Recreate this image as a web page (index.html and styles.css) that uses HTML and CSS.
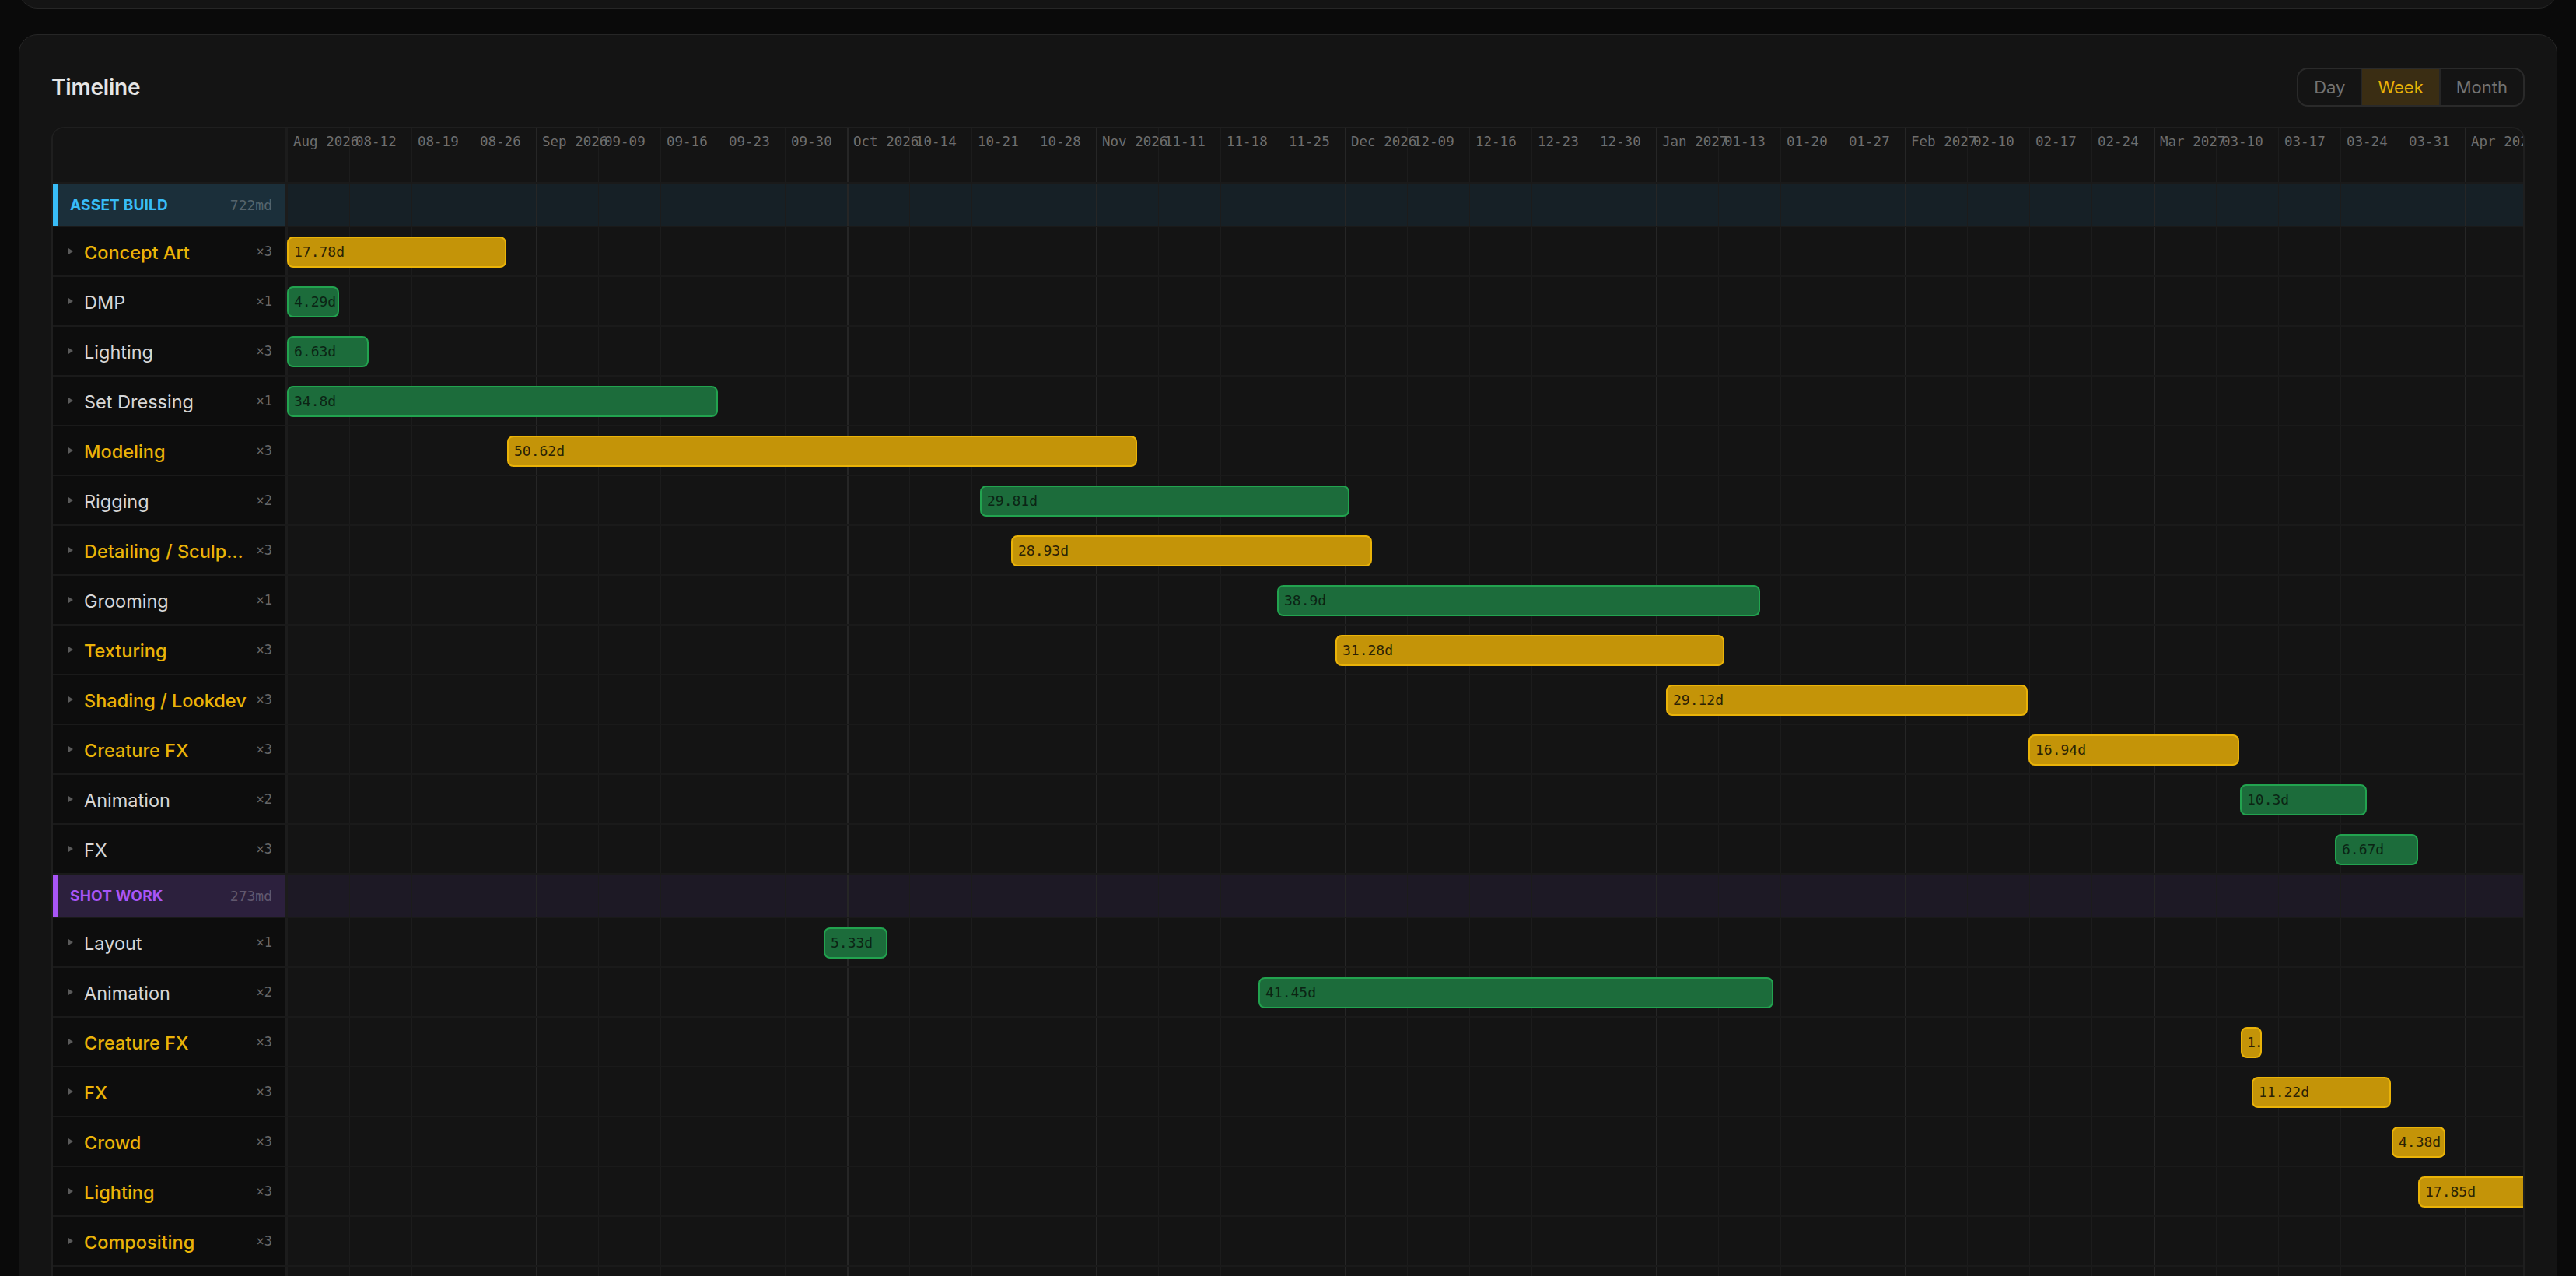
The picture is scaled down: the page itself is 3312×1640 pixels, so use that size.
FILE: index.html
```html
<!DOCTYPE html>
<html lang="en">
<head>
<meta charset="utf-8">
<title>Production Timeline</title>
<link rel="stylesheet" href="styles.css">
</head>
<body>
<div class="page">
  <section class="card card-summary"></section>

  <section class="card card-timeline">
    <header class="card-head">
      <h2 class="card-title">Timeline</h2>
      <div class="seg" role="tablist">
        <button class="seg-btn" type="button">Day</button>
        <button class="seg-btn is-active" type="button">Week</button>
        <button class="seg-btn" type="button">Month</button>
      </div>
    </header>

    <div class="gantt">
      <!-- week scale -->
      <div class="g-row g-head">
        <div class="g-label"></div>
        <div class="g-track g-scale">
          <div class="wk">Aug 2026</div><div class="wk">08-12</div><div class="wk">08-19</div><div class="wk">08-26</div>
          <div class="wk">Sep 2026</div><div class="wk">09-09</div><div class="wk">09-16</div><div class="wk">09-23</div><div class="wk">09-30</div>
          <div class="wk">Oct 2026</div><div class="wk">10-14</div><div class="wk">10-21</div><div class="wk">10-28</div>
          <div class="wk">Nov 2026</div><div class="wk">11-11</div><div class="wk">11-18</div><div class="wk">11-25</div>
          <div class="wk">Dec 2026</div><div class="wk">12-09</div><div class="wk">12-16</div><div class="wk">12-23</div><div class="wk">12-30</div>
          <div class="wk">Jan 2027</div><div class="wk">01-13</div><div class="wk">01-20</div><div class="wk">01-27</div>
          <div class="wk">Feb 2027</div><div class="wk">02-10</div><div class="wk">02-17</div><div class="wk">02-24</div>
          <div class="wk">Mar 2027</div><div class="wk">03-10</div><div class="wk">03-17</div><div class="wk">03-24</div><div class="wk">03-31</div>
          <div class="wk">Apr 2027</div>
        </div>
      </div>

      <!-- Asset build -->
      <div class="g-row g-group g-group--asset">
        <div class="g-label"><span class="grp-name">Asset Build</span><span class="grp-total">722md</span></div>
        <div class="g-track"></div>
      </div>

      <div class="g-row g-task">
        <div class="g-label"><span class="caret"></span><span class="task-name is-hot">Concept Art</span><span class="task-count">×3</span></div>
        <div class="g-track"><div class="bar bar--amber" style="left:0;width:282px">17.78d</div></div>
      </div>
      <div class="g-row g-task">
        <div class="g-label"><span class="caret"></span><span class="task-name">DMP</span><span class="task-count">×1</span></div>
        <div class="g-track"><div class="bar bar--green" style="left:0;width:67px">4.29d</div></div>
      </div>
      <div class="g-row g-task">
        <div class="g-label"><span class="caret"></span><span class="task-name">Lighting</span><span class="task-count">×3</span></div>
        <div class="g-track"><div class="bar bar--green" style="left:0;width:105px">6.63d</div></div>
      </div>
      <div class="g-row g-task">
        <div class="g-label"><span class="caret"></span><span class="task-name">Set Dressing</span><span class="task-count">×1</span></div>
        <div class="g-track"><div class="bar bar--green" style="left:0;width:554px">34.8d</div></div>
      </div>
      <div class="g-row g-task">
        <div class="g-label"><span class="caret"></span><span class="task-name is-hot">Modeling</span><span class="task-count">×3</span></div>
        <div class="g-track"><div class="bar bar--amber" style="left:283px;width:810px">50.62d</div></div>
      </div>
      <div class="g-row g-task">
        <div class="g-label"><span class="caret"></span><span class="task-name">Rigging</span><span class="task-count">×2</span></div>
        <div class="g-track"><div class="bar bar--green" style="left:891px;width:475px">29.81d</div></div>
      </div>
      <div class="g-row g-task">
        <div class="g-label"><span class="caret"></span><span class="task-name is-hot">Detailing / Sculpting</span><span class="task-count">×3</span></div>
        <div class="g-track"><div class="bar bar--amber" style="left:931px;width:464px">28.93d</div></div>
      </div>
      <div class="g-row g-task">
        <div class="g-label"><span class="caret"></span><span class="task-name">Grooming</span><span class="task-count">×1</span></div>
        <div class="g-track"><div class="bar bar--green" style="left:1273px;width:621px">38.9d</div></div>
      </div>
      <div class="g-row g-task">
        <div class="g-label"><span class="caret"></span><span class="task-name is-hot">Texturing</span><span class="task-count">×3</span></div>
        <div class="g-track"><div class="bar bar--amber" style="left:1348px;width:500px">31.28d</div></div>
      </div>
      <div class="g-row g-task">
        <div class="g-label"><span class="caret"></span><span class="task-name is-hot">Shading / Lookdev</span><span class="task-count">×3</span></div>
        <div class="g-track"><div class="bar bar--amber" style="left:1773px;width:465px">29.12d</div></div>
      </div>
      <div class="g-row g-task">
        <div class="g-label"><span class="caret"></span><span class="task-name is-hot">Creature FX</span><span class="task-count">×3</span></div>
        <div class="g-track"><div class="bar bar--amber" style="left:2239px;width:271px">16.94d</div></div>
      </div>
      <div class="g-row g-task">
        <div class="g-label"><span class="caret"></span><span class="task-name">Animation</span><span class="task-count">×2</span></div>
        <div class="g-track"><div class="bar bar--green" style="left:2511px;width:163px">10.3d</div></div>
      </div>
      <div class="g-row g-task">
        <div class="g-label"><span class="caret"></span><span class="task-name">FX</span><span class="task-count">×3</span></div>
        <div class="g-track"><div class="bar bar--green" style="left:2633px;width:107px">6.67d</div></div>
      </div>

      <!-- Shot work -->
      <div class="g-row g-group g-group--shot">
        <div class="g-label"><span class="grp-name">Shot Work</span><span class="grp-total">273md</span></div>
        <div class="g-track"></div>
      </div>

      <div class="g-row g-task">
        <div class="g-label"><span class="caret"></span><span class="task-name">Layout</span><span class="task-count">×1</span></div>
        <div class="g-track"><div class="bar bar--green" style="left:690px;width:82px">5.33d</div></div>
      </div>
      <div class="g-row g-task">
        <div class="g-label"><span class="caret"></span><span class="task-name">Animation</span><span class="task-count">×2</span></div>
        <div class="g-track"><div class="bar bar--green" style="left:1249px;width:662px">41.45d</div></div>
      </div>
      <div class="g-row g-task">
        <div class="g-label"><span class="caret"></span><span class="task-name is-hot">Creature FX</span><span class="task-count">×3</span></div>
        <div class="g-track"><div class="bar bar--amber bar--tight" style="left:2512px;width:27px">1.62d</div></div>
      </div>
      <div class="g-row g-task">
        <div class="g-label"><span class="caret"></span><span class="task-name is-hot">FX</span><span class="task-count">×3</span></div>
        <div class="g-track"><div class="bar bar--amber" style="left:2526px;width:179px">11.22d</div></div>
      </div>
      <div class="g-row g-task">
        <div class="g-label"><span class="caret"></span><span class="task-name is-hot">Crowd</span><span class="task-count">×3</span></div>
        <div class="g-track"><div class="bar bar--amber" style="left:2706px;width:69px">4.38d</div></div>
      </div>
      <div class="g-row g-task">
        <div class="g-label"><span class="caret"></span><span class="task-name is-hot">Lighting</span><span class="task-count">×3</span></div>
        <div class="g-track"><div class="bar bar--amber" style="left:2740px;width:282px">17.85d</div></div>
      </div>
      <div class="g-row g-task">
        <div class="g-label"><span class="caret"></span><span class="task-name is-hot">Compositing</span><span class="task-count">×3</span></div>
        <div class="g-track"></div>
      </div>
      <div class="g-row g-task">
        <div class="g-label"><span class="caret"></span><span class="task-name">Delivery</span><span class="task-count">×1</span></div>
        <div class="g-track"></div>
      </div>
    </div>
  </section>
</div>
</body>
</html>
```

FILE: styles.css
```css
* {
  box-sizing: border-box;
  margin: 0;
  padding: 0;
}

html,
body {
  height: 100%;
  overflow: hidden;
  background: #0a0a0a;
}

body {
  font-family: Inter, "Noto Sans", sans-serif;
  color: #d4d4d4;
}

.page {
  padding: 0 24px;
}

/* ---------- cards ---------- */
.card {
  background: #141414;
  border: 1px solid #262626;
  border-radius: 24px;
}

/* the panel above, scrolled mostly out of view */
.card-summary {
  height: 120px;
  margin-top: -109px;
}

.card-timeline {
  margin-top: 33px;
  padding: 42px 41px 0;
}

.card-head {
  display: flex;
  align-items: center;
  justify-content: space-between;
  height: 50px;
}

.card-title {
  font-size: 28px;
  font-weight: 600;
  color: #e5e5e5;
  letter-spacing: -0.2px;
}

/* ---------- segmented control ---------- */
.seg {
  display: flex;
  height: 50px;
  border: 2px solid #2a2a2a;
  border-radius: 14px;
  overflow: hidden;
}

.seg-btn {
  border: 0;
  background: transparent;
  font-family: inherit;
  font-size: 22px;
  color: #737373;
  padding: 0 20px;
  cursor: pointer;
}

.seg-btn + .seg-btn {
  border-left: 2px solid #262626;
}

.seg-btn.is-active {
  background: #3a2d13;
  color: #eab308;
}

/* ---------- gantt ---------- */
.gantt {
  margin-top: 26px;
  border: 2px solid #1f1f1f;
  border-bottom: 0;
  border-radius: 16px 16px 0 0;
  overflow: hidden;
  background: #141414;
}

.g-row {
  display: flex;
  border-top: 2px solid #1a1a1a;
}

.g-head {
  border-top: 0;
  height: 69px;
}

.g-group {
  height: 56px;
}

.g-task {
  height: 64px;
}

.g-label {
  width: 301px;
  flex: none;
  display: flex;
  align-items: center;
  border-right: 3px solid #1c1c1c;
  background: #0d0d0d;
}

.g-head .g-label {
  background: #141414;
}

/* week / month grid lines behind every row */
.g-track {
  flex: 1;
  min-width: 0;
  position: relative;
  overflow: hidden;
  background:
    linear-gradient(#262626, #262626) 320px 0 / 2px 100% no-repeat,
    linear-gradient(#262626, #262626) 720px 0 / 2px 100% no-repeat,
    linear-gradient(#262626, #262626) 1040px 0 / 2px 100% no-repeat,
    linear-gradient(#262626, #262626) 1360px 0 / 2px 100% no-repeat,
    linear-gradient(#262626, #262626) 1760px 0 / 2px 100% no-repeat,
    linear-gradient(#262626, #262626) 2080px 0 / 2px 100% no-repeat,
    linear-gradient(#262626, #262626) 2400px 0 / 2px 100% no-repeat,
    linear-gradient(#262626, #262626) 2800px 0 / 2px 100% no-repeat,
    repeating-linear-gradient(90deg, #1c1c1c 0 1px, transparent 1px 80px);
}

.g-scale {
  display: flex;
}

.wk {
  width: 80px;
  flex: none;
  padding: 6px 8px;
  font-family: "DejaVu Sans Mono", "Liberation Mono", monospace;
  font-size: 17.5px;
  line-height: 22px;
  color: #6e6e6e;
  white-space: nowrap;
}

/* ---------- group rows ---------- */
.g-group .g-label {
  border-left: 6px solid;
  padding: 0 16px;
}

.grp-name {
  flex: 1;
  font-size: 19px;
  font-weight: 700;
  text-transform: uppercase;
  letter-spacing: 0.2px;
}

.grp-total {
  font-family: "DejaVu Sans Mono", "Liberation Mono", monospace;
  font-size: 18px;
  color: rgba(255, 255, 255, 0.27);
}

.g-group--asset .g-label {
  background: #1b2f3a;
  border-left-color: #38bdf8;
}

.g-group--asset .grp-name {
  color: #38bdf8;
}

.g-group--asset .g-track {
  background-color: #162026;
}

.g-group--shot .g-label {
  background: #2c203d;
  border-left-color: #a855f7;
}

.g-group--shot .grp-name {
  color: #a855f7;
}

.g-group--shot .g-track {
  background-color: #1d1925;
}

/* ---------- task rows ---------- */
.g-task .g-label {
  padding: 0 16px 0 20px;
}

.caret {
  flex: none;
  width: 0;
  height: 0;
  border-left: 6px solid #5a5a5a;
  border-top: 4px solid transparent;
  border-bottom: 4px solid transparent;
}

.task-name {
  flex: 1;
  min-width: 0;
  margin-left: 14px;
  padding-top: 2px;
  font-size: 23.5px;
  white-space: nowrap;
  overflow: hidden;
  text-overflow: ellipsis;
  color: #d6d6d6;
}

.task-name.is-hot {
  color: #eab308;
  font-weight: 500;
}

.task-count {
  flex: none;
  margin-left: 12px;
  font-family: "DejaVu Sans Mono", "Liberation Mono", monospace;
  font-size: 17px;
  color: #666;
}

/* ---------- bars ---------- */
.bar {
  position: absolute;
  top: 12px;
  height: 40px;
  border: 2px solid;
  border-radius: 8px;
  padding-left: 7px;
  font-family: "DejaVu Sans Mono", "Liberation Mono", monospace;
  font-size: 18px;
  line-height: 36px;
  white-space: nowrap;
  overflow: hidden;
}

.bar--tight {
  padding-left: 6px;
  letter-spacing: -1px;
}

.bar--amber {
  background: #c49408;
  border-color: #eab308;
  color: #2a2105;
}

.bar--green {
  background: #1c6c3b;
  border-color: #22a34f;
  color: #0b2414;
}
```
